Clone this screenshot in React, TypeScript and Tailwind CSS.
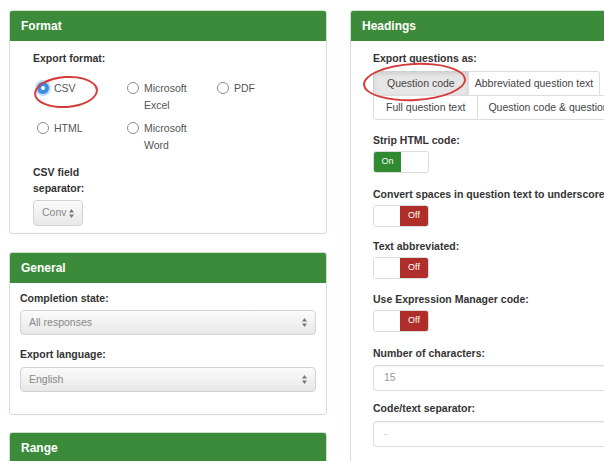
import type { ReactNode } from 'react';

// Export settings: format / general / range on the left, headings on the right

function Panel({ title, children, className = '' }: { title: string; children?: ReactNode; className?: string }) {
    return (
        <div className={`relative rounded-[3px] border border-[#cfe0cb] bg-white ${className}`}>
            <div className="flex h-[30px] items-center rounded-t-[2px] bg-[#3b8b3a] px-[11px] text-[12px] font-bold text-white">
                {title}
            </div>
            {children}
        </div>
    );
}

function Radio({ checked }: { checked?: boolean }) {
    return checked ? (
        <span className="mt-[2px] flex h-[12px] w-[12px] shrink-0 items-center justify-center rounded-full bg-[#3a8ee6] shadow-[0_0_0_2px_#c3dcf6]">
            <span className="h-[4px] w-[4px] rounded-full bg-white" />
        </span>
    ) : (
        <span className="mt-[2px] h-[12px] w-[12px] shrink-0 rounded-full border border-[#8c8c8c] bg-white" />
    );
}

function Option({ lines, checked }: { lines: string[]; checked?: boolean }) {
    return (
        <div className="flex gap-[5px] leading-[17px] text-[#555]">
            <Radio checked={checked} />
            <div>
                {lines.map((l) => (
                    <div key={l}>{l}</div>
                ))}
            </div>
        </div>
    );
}

function Arrows() {
    return (
        <svg width="5" height="9" viewBox="0 0 5 9" className="shrink-0">
            <path d="M2.5 0 L5 3.5 L0 3.5 Z" fill="#777" />
            <path d="M2.5 9 L5 5.5 L0 5.5 Z" fill="#777" />
        </svg>
    );
}

function Select({ value, className = '' }: { value: string; className?: string }) {
    return (
        <div
            className={`flex items-center justify-between rounded-[4px] border border-[#d2d2d2] bg-gradient-to-b from-[#fbfbfb] to-[#e8e8e8] px-[8px] text-[#888] ${className}`}
        >
            <span>{value}</span>
            <Arrows />
        </div>
    );
}

function Toggle({ on }: { on: boolean }) {
    return (
        <div className="mt-[3px] flex h-[22px] w-[56px] overflow-hidden rounded-[3px] border border-[#dadada] text-[9px] text-white">
            {on ? (
                <>
                    <span className="flex w-[27px] items-center justify-center bg-[#2f8a30]">On</span>
                    <span className="flex-1 bg-white" />
                </>
            ) : (
                <>
                    <span className="flex-1 bg-white" />
                    <span className="flex w-[28px] items-center justify-center bg-[#b02e2a]">Off</span>
                </>
            )}
        </div>
    );
}

function Label({ children, className = '' }: { children: ReactNode; className?: string }) {
    return <div className={`font-bold leading-[15px] text-[#333] ${className}`}>{children}</div>;
}

function TextInput({ value, className = '' }: { value: string; className?: string }) {
    return (
        <div
            className={`flex h-[26px] items-center rounded-[3px] border border-[#dcdcdc] bg-white px-[10px] text-[#999] shadow-[inset_0_1px_1px_rgba(0,0,0,0.06)] ${className}`}
        >
            {value}
        </div>
    );
}

export default function App() {
    return (
        <div className="h-[461px] w-[604px] overflow-hidden bg-white font-['Liberation_Sans',Arial,sans-serif] text-[10.5px]">
            <div className="flex gap-[23px] pl-[9px] pt-[10px]">
                {/* Left column */}
                <div className="w-[318px] shrink-0">
                    <Panel title="Format">
                        <div className="pb-[7px] pl-[23px] pt-[10px]">
                            <Label>Export format:</Label>
                            <div className="ml-[4px] mt-[14px] grid grid-cols-[90px_90px_90px] gap-y-[6px]">
                                <Option lines={['CSV']} checked />
                                <Option lines={['Microsoft', 'Excel']} />
                                <Option lines={['PDF']} />
                                <Option lines={['HTML']} />
                                <Option lines={['Microsoft', 'Word']} />
                            </div>
                            <div className="mt-[10px] font-bold leading-[16px] text-[#333]">
                                <div>CSV field</div>
                                <div>separator:</div>
                            </div>
                            <Select value="Conv" className="mt-[4px] h-[26px] w-[50px] px-[6px]" />
                        </div>
                        {/* highlight ring around the CSV choice */}
                        <div className="absolute left-[24px] top-[65px] h-[32px] w-[64px] -rotate-[4deg] rounded-[50%] border-2 border-[#d43b3b]" />
                    </Panel>

                    <Panel title="General" className="mt-[18px]">
                        <div className="px-[10px] pb-[22px] pt-[8px]">
                            <Label>Completion state:</Label>
                            <Select value="All responses" className="mt-[4px] h-[25px]" />
                            <Label className="mt-[12px]">Export language:</Label>
                            <Select value="English" className="mt-[5px] h-[25px]" />
                        </div>
                    </Panel>

                    <Panel title="Range" className="mt-[17px]">
                        <div className="h-[60px]" />
                    </Panel>
                </div>

                {/* Right column */}
                <div className="w-[318px] shrink-0">
                    <Panel title="Headings">
                        <div className="pb-[20px] pl-[22px] pr-[22px] pt-[10px]">
                            <Label>Export questions as:</Label>
                            <div className="mt-[5px] text-[#444]">
                                <div className="flex">
                                    <div className="flex h-[25px] items-center rounded-tl-[3px] border border-[#cfcfcf] bg-[#e6e6e6] px-[13px] shadow-[inset_0_2px_4px_rgba(0,0,0,0.1)]">
                                        Question code
                                    </div>
                                    <div className="-ml-px flex h-[25px] items-center rounded-tr-[3px] border border-[#dcdcdc] bg-white px-[6px]">
                                        Abbreviated question text
                                    </div>
                                </div>
                                <div className="-mt-px flex">
                                    <div className="flex h-[25px] items-center rounded-bl-[3px] border border-[#dcdcdc] bg-white px-[12px] whitespace-nowrap">
                                        Full question text
                                    </div>
                                    <div className="-ml-px flex h-[25px] items-center border border-[#dcdcdc] bg-white px-[10px] whitespace-nowrap">
                                        Question code &amp; question text
                                    </div>
                                </div>
                            </div>

                            <Label className="mt-[13px]">Strip HTML code:</Label>
                            <Toggle on />

                            <Label className="mt-[14px] whitespace-nowrap">Convert spaces in question text to underscores:</Label>
                            <Toggle on={false} />

                            <Label className="mt-[12px]">Text abbreviated:</Label>
                            <Toggle on={false} />

                            <Label className="mt-[13px]">Use Expression Manager code:</Label>
                            <Toggle on={false} />

                            <Label className="mt-[14px]">Number of characters:</Label>
                            <TextInput value="15" className="mt-[4px]" />

                            <Label className="mt-[10px]">Code/text separator:</Label>
                            <TextInput value="-" className="mt-[5px] text-[#ccc]" />
                        </div>
                        {/* highlight ring around the question code button */}
                        <div className="absolute left-[12px] top-[52px] h-[38px] w-[103px] -rotate-[3deg] rounded-[50%] border-2 border-[#d43b3b]" />
                    </Panel>
                </div>
            </div>
        </div>
    );
}
